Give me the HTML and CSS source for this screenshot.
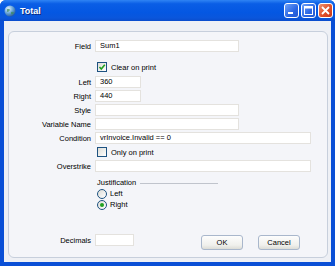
FILE: index.html
```html
<!DOCTYPE html>
<html lang="en">

<head>
    <meta charset="UTF-8">
    <title>Total</title>
    <link rel="stylesheet" href="styles.css">
</head>

<body>
    <div class="window">
        <div class="titlebar">
            <svg class="app-icon" width="12" height="12" viewBox="0 0 12 12">
                <defs>
                    <radialGradient id="globe" cx="0.35" cy="0.3" r="0.8">
                        <stop offset="0" stop-color="#e8f4ff" />
                        <stop offset="0.5" stop-color="#6aa6d8" />
                        <stop offset="1" stop-color="#1d4f8c" />
                    </radialGradient>
                </defs>
                <circle cx="6" cy="6" r="5.5" fill="url(#globe)" />
                <path d="M3 4 Q5 3 6 5 Q5 7 3 7 Z M7 7 Q9 6 10 8 Q8 10 7 9 Z" fill="#3a8a5a" opacity="0.7" />
            </svg>
            <span class="title">Total</span>
            <div class="title-buttons">
                <div class="tbtn">
                    <svg width="15" height="15" viewBox="0 0 15 15"><rect x="4" y="9" width="5" height="2" fill="#fff" /></svg>
                </div>
                <div class="tbtn">
                    <svg width="15" height="15" viewBox="0 0 15 15"><rect x="3.5" y="3.5" width="8" height="8" fill="none" stroke="#fff" stroke-width="1" /><rect x="3.5" y="3.5" width="8" height="2" fill="#fff" /></svg>
                </div>
                <div class="tbtn close">
                    <svg width="15" height="15" viewBox="0 0 15 15"><path d="M4 4 L11 11 M11 4 L4 11" stroke="#fff" stroke-width="1.8" /></svg>
                </div>
            </div>
        </div>

        <div class="body">
            <div class="panel">
                <div class="row first">
                    <label class="lbl">Field</label>
                    <div class="input wide">Sum1</div>
                </div>
                <div class="row check-row">
                    <span class="lbl"></span>
                    <span class="check checked">
                        <svg width="8" height="8" viewBox="0 0 8 8"><path d="M1.5 4 L3.3 6 L6.8 1.8" fill="none" stroke="#21a121" stroke-width="1.6" /></svg>
                    </span>
                    <span class="opt">Clear on print</span>
                </div>
                <div class="row tight">
                    <label class="lbl">Left</label>
                    <div class="input short">360</div>
                </div>
                <div class="row">
                    <label class="lbl">Right</label>
                    <div class="input short">440</div>
                </div>
                <div class="row">
                    <label class="lbl">Style</label>
                    <div class="input wide"></div>
                </div>
                <div class="row">
                    <label class="lbl">Variable Name</label>
                    <div class="input wide"></div>
                </div>
                <div class="row">
                    <label class="lbl">Condition</label>
                    <div class="input full">vrInvoice.Invalid == 0</div>
                </div>
                <div class="row">
                    <span class="lbl"></span>
                    <span class="check"></span>
                    <span class="opt">Only on print</span>
                </div>
                <div class="row">
                    <label class="lbl">Overstrike</label>
                    <div class="input full"></div>
                </div>

                <div class="group">
                    <div class="group-head">
                        <span>Justification</span>
                        <span class="group-line"></span>
                    </div>
                    <div class="radio-row">
                        <span class="radio"></span>
                        <span class="opt">Left</span>
                    </div>
                    <div class="radio-row">
                        <span class="radio on"></span>
                        <span class="opt">Right</span>
                    </div>
                </div>

                <div class="bottom">
                    <div class="row decimals">
                        <label class="lbl">Decimals</label>
                        <div class="input tiny"></div>
                    </div>
                    <div class="buttons">
                        <button type="button">OK</button>
                        <button type="button">Cancel</button>
                    </div>
                </div>
            </div>
        </div>
    </div>
</body>

</html>
```

FILE: styles.css
```css
body {
    margin: 0;
    font-family: "Liberation Sans", Arial, sans-serif;
    font-size: 7.5px;
    color: #000;
}

.window {
    width: 335px;
    height: 266px;
    background: #0a4fd6;
    display: flex;
    flex-direction: column;
    box-sizing: border-box;
    border-radius: 6px 6px 0 0;
    overflow: hidden;
}

.titlebar {
    height: 21px;
    flex-shrink: 0;
    display: flex;
    align-items: center;
    padding: 0 2px 0 4px;
    background: linear-gradient(#2f84f4 0%, #0a5ee6 18%, #0457e2 60%, #0a56dc 85%, #0a4ccc 100%);
}

.app-icon {
    margin-right: 4px;
}

.title {
    color: #fff;
    font-weight: bold;
    font-size: 9px;
    text-shadow: 1px 1px 0 #0a2a80;
}

.title-buttons {
    margin-left: auto;
    display: flex;
    gap: 2px;
}

.tbtn {
    width: 15px;
    height: 15px;
    box-sizing: border-box;
    border: 1px solid #fff;
    border-radius: 3px;
    background: linear-gradient(135deg, #6fa2f8, #2a66e4 60%, #2458d0);
    display: flex;
}

.tbtn svg {
    margin: -1px;
}

.tbtn.close {
    background: linear-gradient(135deg, #ee9272, #e0502a 55%, #c8381a);
}

.body {
    flex: 1;
    margin: 0 4px 4px 4px;
    background: #eef0f5;
    padding: 10px 3px 4px 4px;
    display: flex;
}

.panel {
    flex: 1;
    background: #f4f5f9;
    border: 1px solid #c7cfdc;
    border-radius: 6px;
    padding-top: 8px;
    display: flex;
    flex-direction: column;
}

.row {
    display: flex;
    align-items: center;
    height: 12px;
    margin-top: 2px;
}

.row.first {
    margin-top: 0;
}

.row.check-row {
    margin-top: 9px;
}

.row.tight {
    margin-top: 3px;
}

.lbl {
    width: 82px;
    text-align: right;
    margin-right: 4px;
    flex-shrink: 0;
}

.input {
    height: 12px;
    box-sizing: border-box;
    background: #fff;
    border: 1px solid #e4e2de;
    padding: 0 4px;
    line-height: 10px;
}

.input.wide {
    width: 144px;
}

.input.full {
    width: 216px;
}

.input.short {
    width: 46px;
}

.input.tiny {
    width: 39px;
}

.check {
    width: 10px;
    height: 10px;
    box-sizing: border-box;
    border: 1px solid #1d5281;
    background: linear-gradient(135deg, #dcdcd6, #fff);
    margin-left: 2px;
    margin-right: 4px;
    display: flex;
    align-items: center;
    justify-content: center;
}

.opt {
    white-space: nowrap;
}

.group {
    margin-left: 88px;
    margin-top: 5px;
}

.group-head {
    display: flex;
    align-items: center;
    height: 10px;
}

.group-line {
    width: 78px;
    height: 1px;
    background: #c0c4cc;
    margin-left: 4px;
    margin-top: 2px;
}

.radio-row {
    display: flex;
    align-items: center;
    height: 11px;
    margin-top: 1px;
}

.radio-row + .radio-row {
    margin-top: 0;
}

.radio {
    width: 10px;
    height: 10px;
    box-sizing: border-box;
    border: 1px solid #1d5281;
    border-radius: 50%;
    background: linear-gradient(135deg, #dcdcd6, #fff);
    margin-right: 3px;
    display: flex;
    align-items: center;
    justify-content: center;
}

.radio.on::after {
    content: "";
    width: 4px;
    height: 4px;
    border-radius: 50%;
    background: #21a121;
}

.bottom {
    margin-top: auto;
    margin-bottom: 7px;
    display: flex;
    align-items: flex-end;
}

.row.decimals {
    margin-bottom: 4px;
}

.buttons {
    margin-left: auto;
    margin-right: 27px;
    display: flex;
    gap: 15px;
}

button {
    font-family: "Liberation Sans", Arial, sans-serif;
    font-size: 7.5px;
    width: 42px;
    height: 15px;
    padding: 0;
    border: 1px solid #a9b7cc;
    border-radius: 3px;
    background: linear-gradient(#fdfdfd, #f0f0ec 70%, #dcdcd6);
    color: #000;
}
```
